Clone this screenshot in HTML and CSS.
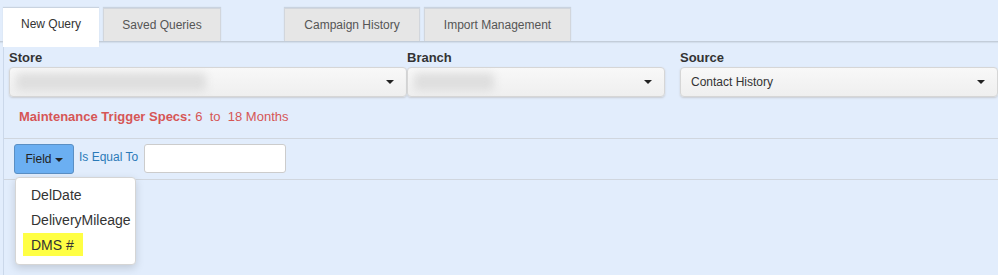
FILE: index.html
```html
<!DOCTYPE html>
<html lang="en">

<head>
    <meta charset="UTF-8">
    <title>New Query</title>
    <link rel="stylesheet" href="styles.css">
</head>

<body>

    <!-- Tabs -->
    <div class="tabs">
        <div class="tab active">New Query</div>
        <div class="tab saved">Saved Queries</div>
        <div class="tab campaign">Campaign History</div>
        <div class="tab import">Import Management</div>
    </div>

    <!-- Query panel -->
    <div class="panel">

        <!-- Filters row -->
        <div class="filters">
            <div class="filter store">
                <label>Store</label>
                <div class="select">
                    <span class="blur blur-store"></span>
                    <span class="caret"></span>
                </div>
            </div>
            <div class="filter branch">
                <label>Branch</label>
                <div class="select">
                    <span class="blur blur-branch"></span>
                    <span class="caret"></span>
                </div>
            </div>
            <div class="filter source">
                <label>Source</label>
                <div class="select">
                    <span class="value">Contact History</span>
                    <span class="caret"></span>
                </div>
            </div>
        </div>

        <!-- Trigger specs -->
        <div class="specs">
            <b>Maintenance Trigger Specs:</b> 6&nbsp; to&nbsp; 18 Months
        </div>

        <!-- Condition row -->
        <div class="condition">
            <div class="field-wrap">
                <button class="field-btn">Field <span class="btn-caret"></span></button>
                <ul class="menu">
                    <li>DelDate</li>
                    <li>DeliveryMileage</li>
                    <li><span class="mark">DMS #</span></li>
                </ul>
            </div>
            <span class="op">Is Equal To</span>
            <input class="cond-input" type="text">
        </div>

    </div>

</body>

</html>
```

FILE: styles.css
```css
/* Page */
body {
    margin: 0;
    background-color: #E2EDFC;
    font-family: "Liberation Sans", Arial, sans-serif;
    color: #333;
    height: 275px;
    overflow: hidden;
}

/* Tabs */
.tabs {
    display: flex;
    align-items: flex-start;
    padding: 8px 0 0 3px;
    height: 33px;
    border-bottom: 1px solid #C3CDD9;
    box-shadow: 0 1px 1px #D3DEEC;
}

.tab {
    height: 32px;
    line-height: 32px;
    font-size: 12px;
    color: #555;
    background-color: #E6E6E6;
    border: 1px solid #D2D6DC;
    border-bottom: none;
    text-align: center;
    margin-right: 4px;
    box-shadow: 0 -1px 1px #C9D3E0;
}

.tab.active {
    background-color: #fff;
    color: #333;
    width: 96px;
    height: 39px;
    border: none;
    position: relative;
    z-index: 2;
}

.tab.saved {
    width: 116px;
}

.tab.campaign {
    width: 134px;
    margin-left: 59px;
}

.tab.import {
    width: 145px;
}

/* Panel */
.panel {
    margin-left: 3px;
    border-left: 1px solid #CBD8EA;
    height: 240px;
    position: relative;
}

/* Filters */
.filters {
    display: flex;
    padding: 9px 0 0 5px;
}

.filter label {
    display: block;
    font-size: 13px;
    font-weight: bold;
    color: #333;
    height: 14px;
    line-height: 14px;
    margin-bottom: 2px;
}

.filter.store {
    width: 398px;
}

.filter.branch {
    width: 258px;
}

.filter.source {
    width: 318px;
    margin-left: 15px;
}

.select {
    height: 28px;
    border: 1px solid #D6D6D6;
    border-radius: 4px;
    background: linear-gradient(#F8F8F8, #EFEFEF);
    box-shadow: 0 1px 2px #C8CCD2;
    display: flex;
    align-items: center;
    padding: 0 12px 0 10px;
    position: relative;
    overflow: hidden;
}

.value {
    flex: 1;
    font-size: 12px;
    color: #333;
}

.blur {
    height: 18px;
    background-color: #DEDEDE;
    filter: blur(4px);
    border-radius: 4px;
}

.blur-store {
    width: 190px;
    margin-left: -4px;
}

.blur-branch {
    width: 80px;
    margin-left: -4px;
}

.caret {
    margin-left: auto;
    width: 0;
    height: 0;
    border-left: 4px solid transparent;
    border-right: 4px solid transparent;
    border-top: 4px solid #222;
}

/* Specs */
.specs {
    font-size: 13px;
    color: #D65656;
    padding: 12px 0 0 15px;
    height: 29px;
    border-bottom: 1px solid #D0D6DE;
}

/* Condition row */
.condition {
    display: flex;
    align-items: flex-start;
    padding: 5px 0 0 10px;
    height: 35px;
    border-bottom: 1px solid #D0D6DE;
}

.field-wrap {
    position: relative;
}

.field-btn {
    width: 60px;
    height: 30px;
    background-color: #6BAFF2;
    border: 1px solid #5A8FC4;
    border-radius: 3px;
    font-family: "Liberation Sans", Arial, sans-serif;
    font-size: 12px;
    color: #222;
    padding: 0;
    display: flex;
    align-items: center;
    justify-content: center;
    gap: 3px;
}

.btn-caret {
    width: 0;
    height: 0;
    border-left: 4px solid transparent;
    border-right: 4px solid transparent;
    border-top: 4px solid #222;
    margin-top: 1px;
}

.op {
    font-size: 12px;
    color: #2A7AB8;
    margin: 6px 0 0 5px;
}

.cond-input {
    margin-left: 6px;
    width: 142px;
    height: 29px;
    box-sizing: border-box;
    border: 1px solid #CCCCCC;
    border-radius: 3px;
    background-color: #fff;
    padding: 0;
}

/* Dropdown menu */
.menu {
    position: absolute;
    top: 33px;
    left: 1px;
    width: 119px;
    margin: 0;
    padding: 5px 0 6px;
    list-style: none;
    background-color: #fff;
    border: 1px solid #D5D5D5;
    border-radius: 4px;
    box-shadow: 0 3px 8px rgba(0, 0, 0, 0.15);
    z-index: 5;
}

.menu li {
    height: 25px;
    line-height: 25px;
    font-size: 14px;
    color: #333;
    padding-left: 15px;
}

.menu li:last-child {
    padding-left: 7px;
}

.mark {
    display: inline-block;
    background-color: #FFFF44;
    padding: 0 8px;
    height: 23px;
    width: 44px;
}
```
